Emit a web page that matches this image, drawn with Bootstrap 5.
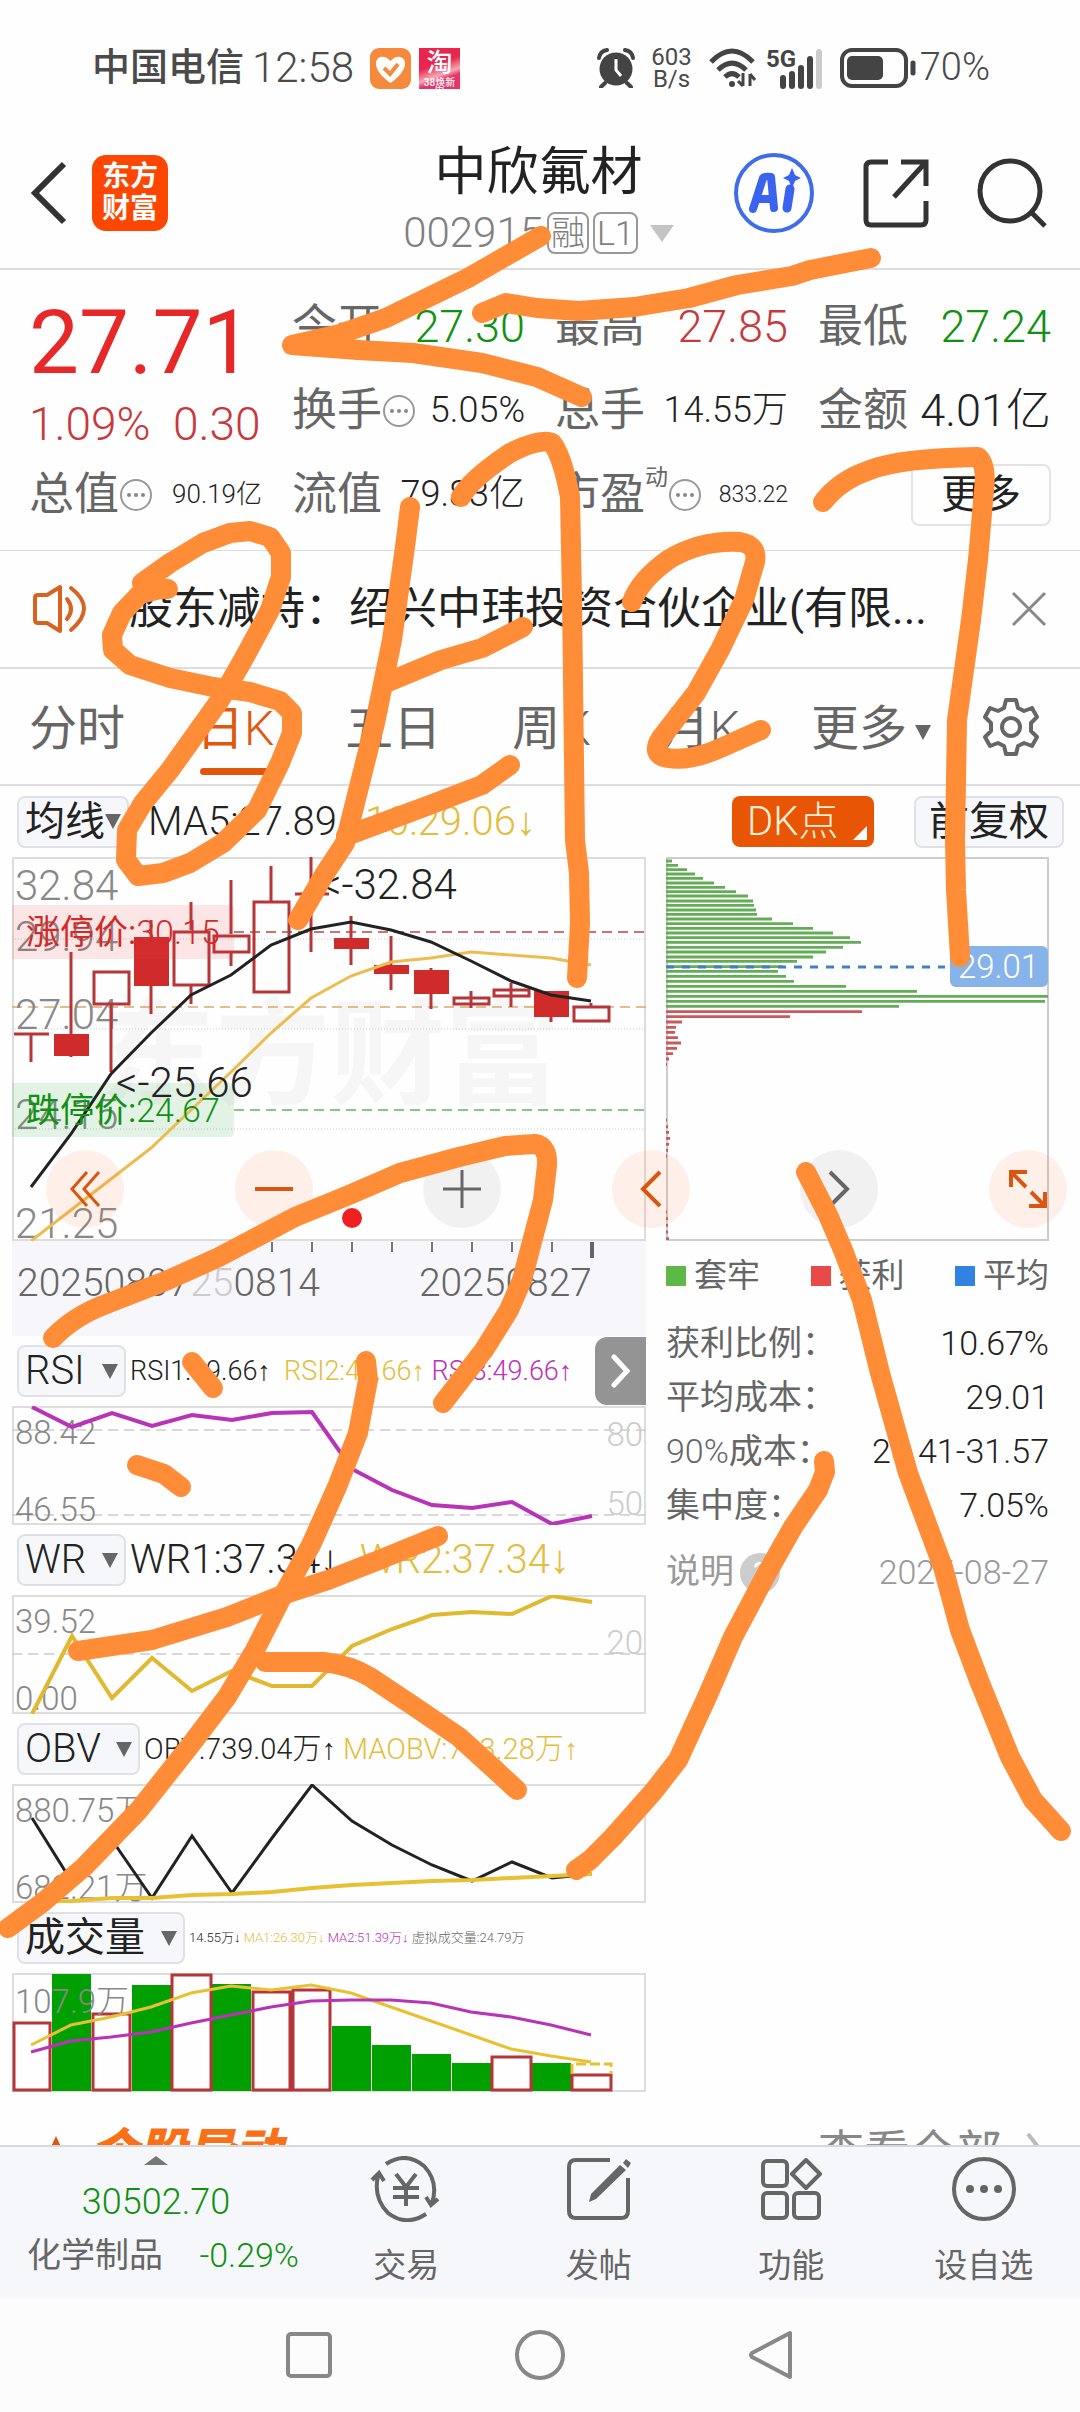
<!DOCTYPE html>
<html lang="zh-CN">
<head>
<meta charset="utf-8">
<meta name="viewport" content="width=device-width, initial-scale=1">
<title>中欣氟材 002915</title>
<link href="https://cdn.jsdelivr.net/npm/bootstrap@5.3.0/dist/css/bootstrap.min.css" rel="stylesheet">
<style>
body{font-family:Roboto,"Liberation Sans","Noto Sans CJK SC",sans-serif;font-weight:300;color:#222;background:#fefefe;line-height:1.2;overflow-x:hidden}
svg{display:block}
button,a{color:inherit;font-weight:inherit}
.plain{background:none;border:0;padding:0}
.ink{color:#666}
.up{color:#c9383b}.down{color:#119111}
.amber{color:#e3bd3d}.violet{color:#b833b8}

.statusbar{height:136px;padding:0 90px 0 92px;color:#4a4a4a;font-size:42px}
.statusbar .carrier{font-size:38px;font-weight:500}
.speed{font-size:24px;line-height:22px;font-weight:400}
.battery-num{font-size:38px}
.tao{width:41px;height:41px;background:linear-gradient(160deg,#e8254d 40%,#f7a8b4 62%,#e7356c 72%);color:#fff;font-size:26px;line-height:30px;font-weight:500}
.tao small{display:block;font-size:10px;line-height:10px}

.appbar{padding:0 33px 18px 30px;height:134px;border-bottom:2px solid #ddd}
.side{flex:1 1 0}
.logo{width:76px;height:76px;border-radius:14px;background:#fd4600;color:#fff;font-size:28px;line-height:32px;font-weight:700}
.name{font-size:52px;line-height:72px;font-weight:400;margin:8px 0 0}
.code{font-size:42px;line-height:48px;color:#808080}
.tagbox{border:2px solid #999;border-radius:8px;font-size:34px;line-height:38px;min-width:40px;padding:0 2px;text-align:center}
.tri{width:0;height:0;border:8px solid transparent;border-top:15px solid #666;border-bottom:0;display:inline-block}
.tri-light{border-width:17px 12px 0;border-top-color:#c4c4c4}

.quote{display:grid;grid-template-columns:repeat(4,1fr);column-gap:30px;grid-auto-rows:84px;padding:15px 29px 13px;border-bottom:1px solid #ddd}
.quote .cell{display:flex;align-items:center;justify-content:space-between;white-space:nowrap}
.quote .lab{font-size:45px;font-weight:400;color:#666;display:inline-flex;align-items:center}
.pricecell{grid-row:span 2;display:flex;flex-direction:column;justify-content:flex-end}
.price{font-size:89px;line-height:96px;font-weight:400;color:#e62828;padding-bottom:4px}
.pct{font-size:46px;line-height:58px}
.f45{font-size:45px}.f36{font-size:36px}.f26{font-size:26px}.f23{font-size:23px}
.dyn{font-size:23px;align-self:flex-start;line-height:20px}
.morebtn{border:2px solid #e4e4e4;border-radius:8px;background:#fefefe;font-size:40px;width:140px;height:62px;font-weight:400;padding:0}

.notice{height:118px;padding:0 33px;border-bottom:2px solid #ddd;font-size:44px;font-weight:400}
.notice span{margin-left:38px}

.periods{height:117px;padding:0 40px 0 29px;border-bottom:2px solid #ddd;font-size:48px;line-height:120px;font-weight:400}
.periods div{gap:71px}
.periods a{text-decoration:none;color:#666;white-space:nowrap;position:relative}
.periods a.active{color:#e0580e}
.periods a.active::after{content:"";position:absolute;left:4px;right:4px;bottom:9px;height:7px;border-radius:4px;background:#e0580e}

.toolbar-row{height:71px;padding:0 16px 0 17px;font-size:40px}
.toolbar-row .gap-a{margin-left:19px}.toolbar-row .gap-b{margin-left:28px}
.pick{border:2px solid #dfe1e6;border-radius:8px;background:#f6f7fa;color:#222;font-size:40px;line-height:48px;height:52px;padding:0 6px;font-weight:inherit;display:inline-flex;align-items:center;justify-content:space-between;white-space:nowrap}
.pick.han{font-weight:400}
.pick.adj{padding:0 13px}
.w-a{width:109px}.w-b{width:123px}.w-c{width:168px}
.dk{position:relative;background:#e85505;color:#fff0d8;border:0;border-radius:8px;height:51px;width:142px;font-size:40px;line-height:48px;padding:0 0 0 15px;text-align:left;margin-right:40px}
.dk::after{content:"";position:absolute;right:7px;bottom:7px;border:7px solid #fff;border-top-color:transparent;border-left-color:transparent}

.board{display:grid;grid-template-columns:minmax(0,634fr) minmax(0,383fr);column-gap:20px;padding:0 31px 0 12px;position:relative}
.board svg.plot{width:100%;height:auto;font-weight:300}
.subhead{height:70px;padding-left:5px;white-space:nowrap;gap:4px}
.t40{font-size:40px}.t29{font-size:29px}.t27{font-size:27px}.t13{font-size:13px}
.nextbtn{width:51px;height:68px;border:0;border-radius:12px 0 0 12px;background:#949494;padding:0}
.axis-lab{fill:#888}
.controls{position:absolute;top:293px;left:46px;right:13px;display:flex;justify-content:space-between}
.rnd{width:78px;height:78px;border:0;border-radius:50%;background:rgba(255,110,50,.1);padding:0;display:grid;place-items:center}
.rnd.off{background:rgba(90,90,90,.08)}
.legend-row{height:70px;margin-bottom:5px;font-size:33px;font-weight:400;color:#666}
.legend-row i{width:20px;height:20px;margin-right:8px;display:inline-block}
.k-green{background:#5cb947}.k-red{background:#e84a4a}.k-blue{background:#3282e2}
.stats div{height:54px;font-size:34px;display:flex;justify-content:space-between;align-items:center}
.stats dt{font-weight:400;color:#666}.stats dd{margin:0;color:#222}
.stats .note{margin-top:13px}
.stats .note dt,.stats .note dd{color:#999}
.help{width:40px;height:40px;border-radius:50%;background:#ccc;color:#fff;font-size:30px;line-height:40px;display:inline-block;text-align:center;margin-left:6px;border:0;padding:0}

.movers{padding:30px 36px 0 46px}
.movers h2{font-size:48px;font-weight:900;font-style:italic;color:#fa7016;margin:0;line-height:60px}
.movers a{font-size:46px;font-weight:400;line-height:60px;color:#888;text-decoration:none}

.dock{background:#f6f7fa;border-top:2px solid #d5d7db;height:153px}
.sector{width:310px;font-size:34px;padding:9px 11px 0 27px}
.sector .summary{padding-right:14px}
.sector .idx{font-size:36px;line-height:46px;padding:14px 0 10px}
.dock a{color:#666;text-decoration:none;font-size:33px;font-weight:400;line-height:44px;padding-top:9px}
.dock a svg{margin-bottom:22px}
.sysnav{background:#fcfcfc;height:114px;gap:183px}
.ink-layer{position:absolute;top:0;left:0;width:100%;height:auto;pointer-events:none;z-index:1040}
</style>
<script src="https://cdn.jsdelivr.net/npm/bootstrap@5.3.0/dist/js/bootstrap.bundle.min.js" defer></script>
</head>
<body class="position-relative">

<div class="statusbar d-flex align-items-center">
  <span class="carrier me-2">中国电信</span><span>12:58</span>
  <svg class="ms-3" width="41" height="41" viewBox="0 0 41 41"><rect width="41" height="41" rx="9" fill="#f58a3c"/><path d="M20.500 35C12 29 6 22 6 15.500C6 8 15 6 20.500 13C26 6 35 8 35 15.500C35 22 29 29 20.500 35Z" fill="#fff"/><path d="M14 20l6 6 8-10" fill="none" stroke="#f58a3c" stroke-width="4"/></svg>
  <div class="tao ms-2 text-center">淘<small>38焕新周</small></div>
  <svg class="ms-auto" width="38" height="40" viewBox="0 0 38 40"><circle cx="19" cy="21" r="16.500" fill="#444"/><path d="M2 10Q3 3 10 2M36 10Q35 3 28 2M8 35l-4 4M30 35l4 4" stroke="#444" stroke-width="4" fill="none" stroke-linecap="round"/><path d="M19 11v11l5 6" stroke="#fff" stroke-width="3" fill="none"/></svg>
  <div class="speed text-center ms-3">603<br>B/s</div>
  <svg class="ms-3" width="50" height="40" viewBox="0 0 50 40"><path d="M3 14Q24-8 45 14M10 22Q24 8 38 22M17 29q7-7 14 0" fill="none" stroke="#444" stroke-width="5"/><circle cx="24" cy="36" r="3" fill="#444"/><path d="M35 25v13m-5-5l5 5M42 38V26m5 6l-5-6" stroke="#444" stroke-width="3" fill="none"/></svg>
  <svg class="ms-2" width="58" height="42" viewBox="0 0 58 42"><text x="0" y="20" font-size="24" font-weight="700" fill="#444">5G</text><path d="M17 31v8M26 27v12M35 21v18M44 12v27" stroke="#444" stroke-width="6" stroke-linecap="round"/><path d="M53 5v34" stroke="#ccc" stroke-width="6" stroke-linecap="round"/></svg>
  <svg class="ms-3" width="76" height="40" viewBox="0 0 76 40"><rect x="2" y="2" width="64" height="36" rx="10" fill="none" stroke="#444" stroke-width="4"/><rect x="7" y="8" width="36" height="24" rx="5" fill="#444"/><path d="M73 15v10" stroke="#444" stroke-width="5" stroke-linecap="round"/></svg>
  <span class="ms-1 battery-num">70%</span>
</div>

<header class="appbar d-flex align-items-center">
  <div class="side d-flex align-items-center gap-4">
    <button class="plain" aria-label="返回"><svg width="38" height="66" viewBox="0 0 38 66"><path d="M34 4L5 33l29 29" fill="none" stroke="#333" stroke-width="6"/></svg></button>
    <div class="logo text-center d-flex align-items-center justify-content-center">东方<br>财富</div>
  </div>
  <div class="text-center">
    <h1 class="name">中欣氟材</h1>
    <div class="code d-flex align-items-center gap-1">002915<span class="tagbox">融</span><span class="tagbox">L1</span><span class="tri tri-light ms-2"></span></div>
  </div>
  <div class="side d-flex align-items-center justify-content-end">
    <button class="plain me-5" aria-label="AI"><svg width="82" height="82" viewBox="0 0 82 82"><circle cx="41" cy="41" r="38" fill="none" stroke="#3f6ce8" stroke-width="4"/><path d="M20 57L30 26Q32 24 38 25L41 56M25 47H38" fill="none" stroke="#3a63f0" stroke-width="8" stroke-linecap="round" stroke-linejoin="round"/><path d="M57 37l-3 19" stroke="#3a63f0" stroke-width="9" stroke-linecap="round"/><path d="M59 16l3 7 6 3-6 3-3 7-3-7-6-3 6-3z" fill="#3a63f0"/></svg></button>
    <button class="plain me-5" aria-label="分享"><svg width="66" height="70" viewBox="0 0 66 70"><path d="M25 4H8q-5 0-5 5v53q0 5 5 5h50q5 0 5-5V43M38 4h25v24M62 5L31 39" fill="none" stroke="#333" stroke-width="5"/></svg></button>
    <button class="plain" aria-label="搜索"><svg width="70" height="70" viewBox="0 0 70 70"><circle cx="33" cy="33" r="30" fill="none" stroke="#333" stroke-width="5"/><path d="M54 54l14 14" stroke="#333" stroke-width="5"/></svg></button>
  </div>
</header>

<section class="quote">
  <div class="pricecell"><div class="price">27.71</div><div class="pct up">1.09%&nbsp; 0.30</div></div>
  <div class="cell"><span class="lab">今开</span><span class="f45 down">27.30</span></div>
  <div class="cell"><span class="lab">最高</span><span class="f45 up">27.85</span></div>
  <div class="cell"><span class="lab">最低</span><span class="f45 down">27.24</span></div>
  <div class="cell"><span class="lab">换手<svg width="34" height="34" viewBox="0 0 34 34"><circle cx="17" cy="17" r="15" fill="none" stroke="#999" stroke-width="2"/><g fill="#888"><circle cx="10" cy="17" r="2"/><circle cx="17" cy="17" r="2"/><circle cx="24" cy="17" r="2"/></g></svg></span><span class="f36">5.05%</span></div>
  <div class="cell"><span class="lab">总手</span><span class="f36">14.55万</span></div>
  <div class="cell"><span class="lab">金额</span><span class="f45">4.01亿</span></div>
  <div class="cell"><span class="lab">总值<svg width="34" height="34" viewBox="0 0 34 34"><circle cx="17" cy="17" r="15" fill="none" stroke="#999" stroke-width="2"/><g fill="#888"><circle cx="10" cy="17" r="2"/><circle cx="17" cy="17" r="2"/><circle cx="24" cy="17" r="2"/></g></svg></span><span class="f26">90.19亿</span></div>
  <div class="cell"><span class="lab">流值</span><span class="f36">79.83亿</span></div>
  <div class="cell"><span class="lab">市盈<span class="dyn">动</span><svg width="34" height="34" viewBox="0 0 34 34"><circle cx="17" cy="17" r="15" fill="none" stroke="#999" stroke-width="2"/><g fill="#888"><circle cx="10" cy="17" r="2"/><circle cx="17" cy="17" r="2"/><circle cx="24" cy="17" r="2"/></g></svg></span><span class="f23">833.22</span></div>
  <div class="cell justify-content-end"><button class="morebtn">更多</button></div>
</section>

<section class="notice d-flex align-items-center">
  <svg width="58" height="50" viewBox="0 0 58 50"><path d="M2 14q0-3 3-3h9L27 3v44L14 39H5q-3 0-3-3z" fill="none" stroke="#d8621f" stroke-width="4" stroke-linejoin="round"/><path d="M34 15q8 10 0 20M38 4q26 20 0 42" fill="none" stroke="#d8621f" stroke-width="4" stroke-linecap="round"/></svg>
  <span class="text-truncate">股东减持：绍兴中玮投资合伙企业(有限...</span>
  <button class="plain ms-auto" aria-label="关闭"><svg width="36" height="36" viewBox="0 0 36 36"><path d="M2 2l32 32M34 2L2 34" stroke="#888" stroke-width="3"/></svg></button>
</section>

<nav class="periods d-flex justify-content-between">
  <div class="d-flex">
  <a href="#">分时</a><a href="#" class="active">日<span class="fw-light">K</span></a><a href="#">五日</a><a href="#">周<span class="fw-light">K</span></a><a href="#">月<span class="fw-light">K</span></a>
  <a href="#">更多<span class="tri align-middle ms-2"></span></a>
  </div>
  <button class="plain" aria-label="设置"><svg width="58" height="60" viewBox="0 0 58 60"><path d="M24 3h10l2 8 6 3 8-3 5 9-6 6v8l6 6-5 9-8-3-6 3-2 8H24l-2-8-6-3-8 3-5-9 6-6v-8l-6-6 5-9 8 3 6-3z" fill="none" stroke="#666" stroke-width="4" stroke-linejoin="round"/><circle cx="29" cy="30" r="9" fill="none" stroke="#666" stroke-width="4"/></svg></button>
</nav>

<div class="toolbar-row d-flex align-items-center">
  <button class="pick han">均线<span class="tri"></span></button>
  <span class="gap-a">MA5:27.89</span><span class="amber gap-b">10:29.06↓</span>
  <button class="dk ms-auto">DK点</button>
  <button class="pick han adj">前复权</button>
</div>

<main class="board">
  <div>
    <svg class="plot" viewBox="0 0 634 384" role="img" aria-label="日K线">
      <text x="88" y="238" font-size="115" font-weight="700" fill="#f6f6f6">东方财富</text>
      <rect x="1" y="1" width="632" height="382" fill="none" stroke="#ddd" stroke-width="2"/>
      <path d="M0 82H634M0 172H634M0 272H634" stroke="#ccc" stroke-dasharray="1 2"/>
      <path d="M222 75H634" stroke="#b44" stroke-dasharray="10 6" stroke-width="1.500"/>
      <path d="M0 150H634" stroke="#dba869" stroke-dasharray="10 6" stroke-width="1.500"/>
      <path d="M222 253H634" stroke="#5cb562" stroke-dasharray="10 6" stroke-width="1.500"/>
      <g font-size="42" class="axis-lab"><text x="3" y="43">32.84</text><text x="3" y="94">29.94</text><text x="3" y="172">27.04</text><text x="3" y="272">24.15</text><text x="3" y="381">21.25</text></g>
      <g stroke="#b53538" stroke-width="3" fill="none">
        <path d="M2 177H37M19 177V205M59 95V200M99 147V215M139 63V157M179 45V73M179 129V147M219 23V77M219 96V109M259 9V44M283 37H317M299 0V95M339 59V108M379 79V133M419 111V152M459 134V151M499 126V150M539 134V165M579 146V149"/>
        <path d="M82 115H117V147H82ZM162 75H197V128H162ZM202 79H237V95H202ZM242 45H277V135H242ZM442 141H477V147H442ZM482 133H517V139H482ZM562 150H597V164H562Z"/>
      </g>
      <path d="M42 177H77V199H42ZM122 80H157V129H122ZM322 81H357V92H322ZM362 108H397V117H362ZM402 113H437V137H402ZM522 134H557V160H522Z" fill="#d02b2b"/>
      <path d="M0 48H217Q222 48 222 53V97Q222 102 217 102H0Z" fill="rgba(240,60,60,.13)"/>
      <path d="M0 226H217Q222 226 222 231V275Q222 280 217 280H0Z" fill="rgba(40,170,70,.13)"/>
      <polyline points="19,384 59,353 99,322 139,291 179,253 219,215 259,176 299,141 339,119 379,105 419,101 459,95 499,98 539,101 579,108" fill="none" stroke="#ecbd4e" stroke-width="3"/>
      <polyline points="19,330 59,277 99,217 139,176 179,138 219,118 259,88 299,72 339,65 379,73 419,85 459,104 499,124 539,138 579,144" fill="none" stroke="#222" stroke-width="3"/>
      <g font-size="34" fill="#d02b2b"><text x="14" y="87"><tspan font-weight="400">涨停价:</tspan>30.15</text></g>
      <g font-size="34" fill="#119111"><text x="14" y="265"><tspan font-weight="400">跌停价:</tspan>24.67</text></g>
      <text x="308" y="42" font-size="42" fill="#222">&lt;-32.84</text>
      <text x="104" y="240" font-size="42" fill="#222">&lt;-25.66</text>
      <circle cx="340" cy="361" r="10" fill="#ee2020"/>
    </svg>
    <svg class="plot" viewBox="0 0 634 95" role="img" aria-label="日期">
      <rect width="634" height="95" fill="#f7f7fb"/>
      <path d="M260 1v10M300 1v10M340 1v10M380 1v10M420 1v10M460 1v10M500 1v10M540 1v10" stroke="#777" stroke-width="2"/><path d="M580 1v16" stroke="#666" stroke-width="4"/>
      <g font-size="39" fill="#666"><text x="5" y="55">20250807</text><text x="308" y="55" text-anchor="end"><tspan fill="#ccc">25</tspan>0814</text><text x="580" y="55" text-anchor="end">20250827</text></g>
    </svg>

    <div class="subhead d-flex align-items-center">
      <button class="pick w-a">RSI<span class="tri"></span></button>
      <span class="t27">RSI1:49.66↑ <span class="amber">&nbsp;RSI2:49.66↑ </span><span class="violet">RSI3:49.66↑</span></span>
      <button class="nextbtn ms-auto" aria-label="展开"><svg class="mx-auto" width="20" height="34" viewBox="0 0 20 34"><path d="M3 3l13 14L3 31" fill="none" stroke="#fff" stroke-width="5" stroke-linecap="round"/></svg></button>
    </div>
    <svg class="plot" viewBox="0 0 634 119" role="img" aria-label="RSI">
      <rect x="1" y="1" width="632" height="117" fill="none" stroke="#ddd" stroke-width="2"/>
      <path d="M0 24H634M0 109H634" stroke="#ccc" stroke-dasharray="10 6" stroke-width="1.500"/>
      <g font-size="33" class="axis-lab"><text x="3" y="38">88.42</text><text x="3" y="115">46.55</text></g>
      <g font-size="33" fill="#ccc" text-anchor="end"><text x="631" y="40">80</text><text x="631" y="109">50</text></g>
      <polyline points="20,1 60,21 100,7 140,20 180,9 220,14 260,7 300,6 340,63 380,84 420,99 460,102 500,96 540,118 580,110" fill="none" stroke="#b833b8" stroke-width="4"/>
    </svg>

    <div class="subhead d-flex align-items-center">
      <button class="pick w-a">WR<span class="tri"></span></button>
      <span class="t40">WR1:37.34↓ <span class="amber">&nbsp;WR2:37.34↓</span></span>
    </div>
    <svg class="plot" viewBox="0 0 634 119" role="img" aria-label="WR">
      <rect x="1" y="1" width="632" height="117" fill="none" stroke="#ddd" stroke-width="2"/>
      <path d="M0 59H634" stroke="#ccc" stroke-dasharray="10 6" stroke-width="1.500"/>
      <g font-size="33" class="axis-lab"><text x="3" y="38">39.52</text><text x="3" y="115">0.00</text></g>
      <text x="631" y="59" font-size="33" fill="#ccc" text-anchor="end">20</text>
      <polyline points="20,119 60,41 100,103 140,63 180,96 220,76 260,91 300,91 340,51 380,34 420,20 460,17 500,19 540,1 580,7" fill="none" stroke="#e0b92f" stroke-width="4"/>
    </svg>

    <div class="subhead d-flex align-items-center">
      <button class="pick w-b">OBV<span class="tri"></span></button>
      <span class="t29">OBV:739.04万↑ <span class="amber">MAOBV:703.28万↑</span></span>
    </div>
    <svg class="plot" viewBox="0 0 634 119" role="img" aria-label="OBV">
      <rect x="1" y="1" width="632" height="117" fill="none" stroke="#ddd" stroke-width="2"/>
      <g font-size="33" class="axis-lab"><text x="3" y="38">880.75万</text><text x="3" y="115">682.21万</text></g>
      <polyline points="20,34 60,98 100,56 140,114 180,52 220,109 260,54 300,1 340,37 380,61 420,81 460,97 500,78 540,94 580,90" fill="none" stroke="#222" stroke-width="3"/>
      <polyline points="20,118 60,117 100,114 140,114 180,111 220,110 260,108 300,104 340,101 380,99 420,97 460,96 500,94 540,92 580,90" fill="none" stroke="#e8c133" stroke-width="4"/>
    </svg>

    <div class="subhead d-flex align-items-center">
      <button class="pick han w-c">成交量<span class="tri"></span></button>
      <span class="t13">14.55万↓ <span class="amber">MA1:26.30万↓</span> <span class="violet">MA2:51.39万↓</span> <span class="ink">虚拟成交量:24.79万</span></span>
    </div>
    <svg class="plot" viewBox="0 0 634 119" role="img" aria-label="成交量">
      <rect x="1" y="1" width="632" height="117" fill="none" stroke="#ddd" stroke-width="2"/>
      <path d="M40 1H79V118H40ZM120 12H159V118H120ZM200 11H239V118H200ZM320 53H359V118H320ZM360 72H399V118H360ZM400 81H439V118H400ZM440 90H479V118H440ZM520 90H559V118H520Z" fill="#00a000"/>
      <path d="M2 50H38V117H2ZM81 41H118V117H81ZM160 2H199V117H160ZM241 19H278V117H241ZM281 17H318V117H281ZM480 84H519V117H480ZM560 102H599V117H560Z" fill="#fefefe" stroke="#b53538" stroke-width="3"/>
      <path d="M560 101V91H599V101" fill="none" stroke="#e8c133" stroke-width="3" stroke-dasharray="10 4"/>
      <text x="3" y="40" font-size="33" class="axis-lab">107.9万</text>
      <polyline points="19,72 59,52 99,44 139,34 179,20 219,13 259,17 299,12 339,20 379,34 419,48 459,62 499,76 539,83 579,89" fill="none" stroke="#e8c133" stroke-width="3"/>
      <polyline points="19,79 59,68 99,64 139,59 179,50 219,42 259,34 299,28 339,27 379,27 419,30 459,39 499,44 539,52 579,62" fill="none" stroke="#b833b8" stroke-width="3"/>
    </svg>
  </div>

  <div>
    <svg class="plot" viewBox="0 0 383 384" role="img" aria-label="筹码分布">
      <rect x="1" y="1" width="381" height="382" fill="none" stroke="#ccc" stroke-width="2"/>
      <path d="M0 4H6M0 8.300H12M0 12.700H21M0 17H29M0 21.300H37M0 26H48M0 30.300H59M0 34.700H70M0 39H82M0 44H87M0 48.300H88M0 53H90M0 57.300H91M0 62H106M0 66.700H127M0 71.300H147M0 76H167M0 80.700H184M0 85.300H195M0 90.300H177M0 95H160M0 100H147M0 104.300H131M0 109.700H117M0 114.300H112M0 119.300H120M0 124.300H128M0 129.300H180M0 134.300H251M0 139.300H382M0 144.300H379M0 149.300H233" stroke="#63ad57" stroke-width="2.800"/>
      <path d="M0 154.700H196M0 159.700H124M0 165H16M0 170.300H10M0 175.300H9M0 180.700H12M0 186H15M0 191.300H11M0 196.700H7M0 202H3M0 207.300H1M0 263H1M0 269.700H2M0 275.300H3M0 281.300H4M0 287.300H3M0 293.300H2M0 299H1M0 355H1M0 361.700H2M0 368.300H2M0 375H2M0 381.700H3" stroke="#c9595b" stroke-width="2.800"/>
      <path d="M0 110H279" stroke="#3f7fc6" stroke-width="3" stroke-dasharray="8 8"/>
      <rect x="284" y="89" width="98" height="41" rx="6" fill="#85b3ea"/>
      <text x="292" y="121" font-size="33" fill="#fff">29.01</text>
    </svg>
    <div class="legend-row d-flex justify-content-between align-items-center">
      <span class="d-flex align-items-center"><i class="k-green"></i>套牢</span><span class="d-flex align-items-center"><i class="k-red"></i>获利</span><span class="d-flex align-items-center"><i class="k-blue"></i>平均</span>
    </div>
    <dl class="stats mb-0">
      <div><dt>获利比例：</dt><dd>10.67%</dd></div>
      <div><dt>平均成本：</dt><dd>29.01</dd></div>
      <div><dt><span class="fw-light">90%</span>成本：</dt><dd>26.41-31.57</dd></div>
      <div><dt>集中度：</dt><dd>7.05%</dd></div>
      <div class="note"><dt>说明<button class="help" aria-label="说明">?</button></dt><dd>2025-08-27</dd></div>
    </dl>
  </div>

  <div class="controls">
    <button class="rnd" aria-label="最左"><svg width="32" height="38" viewBox="0 0 32 38"><path d="M18 2L3 19l15 17M30 2L15 19l15 17" fill="none" stroke="#d8560f" stroke-width="3"/></svg></button>
    <button class="rnd" aria-label="缩小"><svg width="38" height="38" viewBox="0 0 38 38"><path d="M0 19h38" stroke="#d8560f" stroke-width="4"/></svg></button>
    <button class="rnd off" aria-label="放大"><svg width="38" height="38" viewBox="0 0 38 38"><path d="M0 19h38M19 0v38" stroke="#666" stroke-width="3"/></svg></button>
    <button class="rnd" aria-label="左移"><svg width="22" height="38" viewBox="0 0 22 38"><path d="M20 2L3 19l17 17" fill="none" stroke="#d8560f" stroke-width="4"/></svg></button>
    <button class="rnd off" aria-label="右移"><svg width="22" height="38" viewBox="0 0 22 38"><path d="M2 2l17 17L2 36" fill="none" stroke="#666" stroke-width="4"/></svg></button>
    <button class="rnd" aria-label="全屏"><svg width="38" height="38" viewBox="0 0 38 38"><path d="M2 17V2h16M2 2l15 15M36 22v14H20M36 36L22 22" fill="none" stroke="#d8560f" stroke-width="4"/></svg></button>
  </div>
</main>

<section class="movers d-flex justify-content-between">
  <div class="d-flex gap-4"><svg width="20" height="44" viewBox="0 0 20 44"><path d="M0 36L10 14 20 36z" fill="#d8560f"/></svg><h2>个股异动</h2></div>
  <a href="#" class="d-flex align-items-center">查看全部<svg class="ms-4" width="18" height="40" viewBox="0 0 18 40"><path d="M2 2l14 18L2 38" fill="none" stroke="#bbb" stroke-width="4"/></svg></a>
</section>

<div class="fixed-bottom">
  <footer class="dock d-flex text-center">
    <div class="sector">
      <div class="summary">
        <svg class="mx-auto" width="24" height="9" viewBox="0 0 24 9"><path d="M0 9L12 0l12 9z" fill="#777"/></svg>
        <div class="idx down">30502.70</div>
      </div>
      <div class="d-flex justify-content-between"><span class="ink fw-normal">化学制品</span><span class="down">-0.29%</span></div>
    </div>
    <a href="#" class="col"><svg class="mx-auto" width="74" height="66" viewBox="0 0 74 66"><path d="M17 8Q37-5 55 10Q70 26 63 47M69 43l-7 6-5-8M57 58Q37 71 19 57Q4 42 9 20M3 24l7-7 5 8" fill="none" stroke="#666" stroke-width="4"/><path d="M27 18l10 13 10-13M24 32h26M24 41h26M37 31v19" fill="none" stroke="#666" stroke-width="4"/></svg>交易</a>
    <a href="#" class="col"><svg class="mx-auto" width="66" height="66" viewBox="0 0 66 66"><path d="M44 4H10q-7 0-7 7v44q0 7 7 7h45q7 0 7-7V22" fill="none" stroke="#666" stroke-width="4"/><path d="M54 9l6 5-30 29-7 3 2-8z" fill="#666"/><path d="M57 7l3-4 5 4-3 5z" fill="#666"/></svg>发帖</a>
    <a href="#" class="col"><svg class="mx-auto" width="62" height="66" viewBox="0 0 62 66"><g fill="none" stroke="#666" stroke-width="4"><rect x="3" y="5" width="24" height="25" rx="4"/><rect x="3" y="37" width="24" height="25" rx="4"/><rect x="34" y="37" width="25" height="25" rx="4"/><path d="M46 4l14 14-14 14-14-14z" stroke-linejoin="round"/></g></svg>功能</a>
    <a href="#" class="col"><svg class="mx-auto" width="66" height="66" viewBox="0 0 66 66"><circle cx="33" cy="33" r="30" fill="none" stroke="#666" stroke-width="4"/><g fill="#666"><circle cx="19" cy="33" r="4"/><circle cx="33" cy="33" r="4"/><circle cx="47" cy="33" r="4"/></g></svg>设自选</a>
  </footer>
  <div class="sysnav d-flex justify-content-center align-items-center">
    <button class="plain" aria-label="最近"><svg width="46" height="46" viewBox="0 0 46 46"><rect x="2" y="2" width="42" height="42" rx="3" fill="none" stroke="#888" stroke-width="4"/></svg></button>
    <button class="plain" aria-label="主页"><svg width="50" height="50" viewBox="0 0 50 50"><circle cx="25" cy="25" r="23" fill="none" stroke="#888" stroke-width="4"/></svg></button>
    <button class="plain" aria-label="返回"><svg width="46" height="50" viewBox="0 0 46 50"><path d="M42 3v44L4 27q-2-2 0-4z" fill="none" stroke="#888" stroke-width="4" stroke-linejoin="round"/></svg></button>
  </div>
</div>

<svg class="ink-layer" viewBox="0 0 1080 2412" fill="none" stroke="#ff8c37" stroke-width="20" stroke-linecap="round" stroke-linejoin="round" aria-hidden="true">
  <path d="M541 236L468 278L386 318L340 334L292 345L358 350L413 353L482 363L537 377L582 397"/>
  <path d="M871 258L810 270L792 276L737 285L689 298L634 307L579 311L537 308L506 303L482 313"/>
  <path d="M168 589L160 589L140 594L122 613L112 635L113 650L130 665L170 678L213 687L250 692L280 701L292 713L292 733L280 763L257 810L223 843L190 863L163 873L138 876L126 860L127 830L143 803L170 770L220 700L243 660L270 610L281 577L281 553L270 537L250 531L230 533L203 543L170 563L142 583"/>
  <path d="M410 507L405 547L392 640L375 723L355 803L345 843L324 875L298 920"/>
  <path d="M461 497Q470 480 510 453Q540 438 552 443Q562 455 570 497L572 600L575 840L579 873L580 923L577 978"/>
  <path d="M523 627L482 648L441 660L388 682M510 765L482 785L427 806L346 836"/>
  <path d="M632 602Q640 580 668 560Q700 540 740 542Q758 545 755 562L744 600L720 650L696 693L661 738Q650 755 668 758Q690 762 723 747L761 730"/>
  <path d="M823 502Q840 480 870 470Q900 458 978 457Q987 465 984 490L978 560L971 620L957 720L955 840L956 890L960 957"/>
  <path d="M53 1338Q75 1315 109 1303L168 1280L219 1257L295 1217L349 1195L400 1173L459 1157L505 1146L535 1144Q548 1146 547 1165L543 1200L522 1280L509 1310L484 1350L443 1403"/>
  <path d="M192 1362L213 1388M137 1465L164 1474L181 1487"/>
  <path d="M366 1361L368 1380L358 1433L337 1487L311 1545L282 1597L255 1650L227 1697L189 1747L139 1810L84 1867L42 1903L8 1928"/>
  <path d="M78 1651L152 1640L227 1617L282 1595L328 1580L379 1560L438 1536M265 1662H324Q350 1665 370 1677L412 1705L459 1737L492 1767L517 1790"/>
  <path d="M824 1461L825 1472L818 1490L793 1527L767 1573L733 1637L707 1697L678 1760L653 1792L613 1837L590 1860L576 1870M806 1172L828 1215L843 1250L862 1300L880 1373L908 1473L943 1567L960 1630L980 1683L1010 1757L1033 1800L1061 1831"/>
</svg>
</body>
</html>
